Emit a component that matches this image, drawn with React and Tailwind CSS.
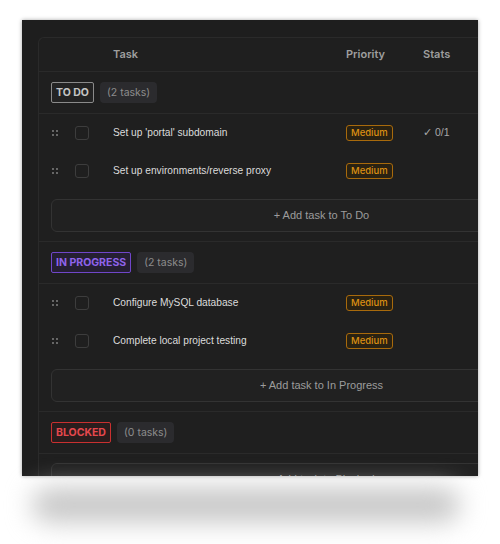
import React from "react";

const groups = [
  {
    key: "todo",
    label: "TO DO",
    name: "To Do",
    badge: "border-[#8a8a8a] text-[#c4c4c4] bg-[#232323]",
    tasks: [
      { id: 1, title: "Set up 'portal' subdomain", priority: "Medium", stats: "0/1" },
      { id: 2, title: "Set up environments/reverse proxy", priority: "Medium", stats: "" },
    ],
  },
  {
    key: "progress",
    label: "IN PROGRESS",
    name: "In Progress",
    badge: "border-[#7046c9] text-[#8f63ec] bg-[#251f33]",
    tasks: [
      { id: 3, title: "Configure MySQL database", priority: "Medium", stats: "" },
      { id: 4, title: "Complete local project testing", priority: "Medium", stats: "" },
    ],
  },
  {
    key: "blocked",
    label: "BLOCKED",
    name: "Blocked",
    badge: "border-[#c93030] text-[#e5484d] bg-[#2a1d1d]",
    tasks: [],
  },
];

function DragHandle() {
  return (
    <svg width="6" height="6" viewBox="0 0 6 6" className="text-[#8a8a8a]">
      <circle cx="1" cy="1" r="0.9" fill="currentColor" />
      <circle cx="5" cy="1" r="0.9" fill="currentColor" />
      <circle cx="1" cy="5" r="0.9" fill="currentColor" />
      <circle cx="5" cy="5" r="0.9" fill="currentColor" />
    </svg>
  );
}

function TaskRow({ task }) {
  return (
    <div className="flex items-center h-[38px]">
      <div className="w-[36px] pl-[13px] flex items-center">
        <DragHandle />
      </div>
      <div className="w-[38px] flex items-center">
        <div className="w-[14px] h-[14px] rounded-[3px] border border-[#3d3d3d]" />
      </div>
      <div className="w-[233px] text-[10.2px] text-[#dcdcdc] font-['Liberation_Sans',sans-serif] truncate">
        {task.title}
      </div>
      <div className="w-[77px] flex items-center">
        <span className="h-[16px] px-[4px] flex items-center rounded-[3px] border border-[#a86a0c] bg-[#2a2212] text-[#db8f12] text-[9.5px] font-medium">
          {task.priority}
        </span>
      </div>
      <div className="flex-1 text-[10.5px] text-[#a8a8a8] font-['Liberation_Sans',sans-serif]">
        {task.stats && <span>✓ {task.stats}</span>}
      </div>
    </div>
  );
}

function Group({ group }) {
  return (
    <div>
      <div className="h-[42px] flex items-center gap-[6px] pl-[12px] border-b border-[#2a2a2a]">
        <span className={`h-[21px] px-[4px] flex items-center rounded-[2px] border text-[10.5px] font-bold ${group.badge}`}>
          {group.label}
        </span>
        <span className="h-[21px] px-[7px] flex items-center rounded-[4px] bg-[#2b2b2e] text-[10.5px] text-[#8d8d8d]">
          ({group.tasks.length} tasks)
        </span>
      </div>
      {group.tasks.map((t) => (
        <TaskRow key={t.id} task={t} />
      ))}
      <div className="pt-[9px] pb-[9px] px-[12px] border-b border-[#2a2a2a]">
        <div className="h-[33px] flex items-center justify-center rounded-[6px] border border-[#333333] bg-[#212121] text-[11px] text-[#9c9c9c] font-['Liberation_Sans',sans-serif]">
          + Add task to {group.name}
        </div>
      </div>
    </div>
  );
}

export default function App() {
  return (
    <div className="w-[500px] h-[544px] bg-white overflow-hidden font-['Inter',sans-serif]">
      <div className="ml-[22px] mt-[20px] w-[456px] h-[456px] overflow-hidden bg-[#1e1e1e] shadow-[0_0_4px_rgba(0,0,0,0.35)]">
        <div className="ml-[16px] mt-[17px] w-[566px] border-l border-t border-[#2a2a2a] rounded-tl-[6px] bg-[#1f1f1f]">
          <div className="flex items-center h-[34px] border-b border-[#2a2a2a] text-[11px] font-semibold text-[#9e9e9e]">
            <div className="w-[74px]" />
            <div className="w-[233px]">Task</div>
            <div className="w-[77px]">Priority</div>
            <div className="flex-1">Stats</div>
          </div>
          {groups.map((g) => (
            <Group key={g.key} group={g} />
          ))}
        </div>
      </div>
      <div className="ml-[32px] mt-[12px] w-[428px] h-[34px] rounded-full bg-[#c6c6c6] blur-[13px]" />
    </div>
  );
}
